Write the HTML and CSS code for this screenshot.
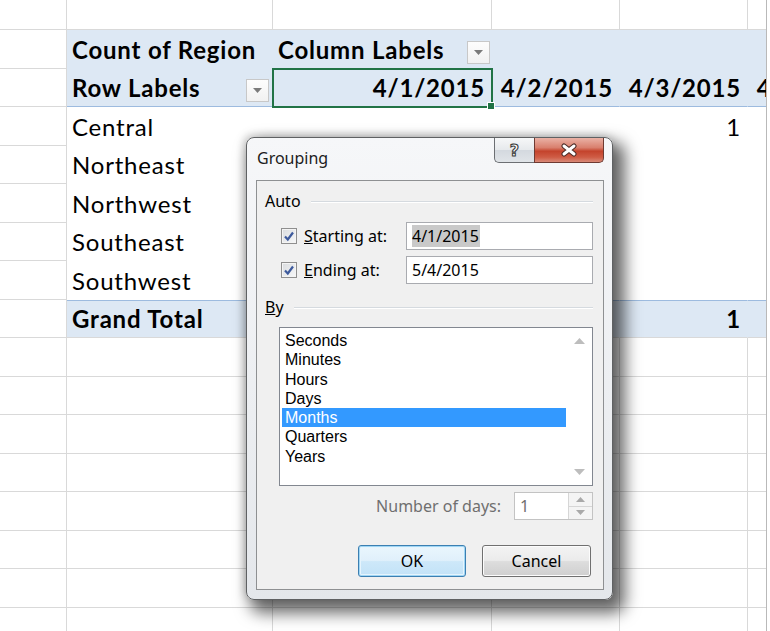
FILE: index.html
```html
<!DOCTYPE html>
<html>
<head>
<meta charset="utf-8">
<title>Grouping</title>
<link rel="stylesheet" href="styles.css">
</head>
<body>
<div class="sheet">
  <div class="row"><div class="c"></div><div class="c"></div><div class="c"></div><div class="c"></div><div class="c"></div><div class="c"></div></div>
  <div class="row">
    <div class="c"></div>
    <div class="c p ph b">Count of Region</div>
    <div class="c p ph b">Column Labels<span class="dd dd-c"><svg width="9" height="5" viewBox="0 0 9 5"><path d="M0 0h9L4.5 5z" fill="#7a7a7a"/></svg></span></div>
    <div class="c p ph"></div><div class="c p ph"></div><div class="c p ph"></div>
  </div>
  <div class="row">
    <div class="c"></div>
    <div class="c p ph hb b">Row Labels<span class="dd dd-b"><svg width="9" height="5" viewBox="0 0 9 5"><path d="M0 0h9L4.5 5z" fill="#7a7a7a"/></svg></span></div>
    <div class="c p ph hb b r sel">4/1/2015</div>
    <div class="c p ph hb b r">4/2/2015</div>
    <div class="c p ph hb b r">4/3/2015</div>
    <div class="c p ph hb b r">4/4/2015</div>
  </div>
  <div class="row"><div class="c"></div><div class="c p">Central</div><div class="c p"></div><div class="c p"></div><div class="c p r">1</div><div class="c p"></div></div>
  <div class="row"><div class="c"></div><div class="c p">Northeast</div><div class="c p"></div><div class="c p"></div><div class="c p"></div><div class="c p"></div></div>
  <div class="row"><div class="c"></div><div class="c p">Northwest</div><div class="c p"></div><div class="c p"></div><div class="c p"></div><div class="c p"></div></div>
  <div class="row"><div class="c"></div><div class="c p">Southeast</div><div class="c p"></div><div class="c p"></div><div class="c p"></div><div class="c p"></div></div>
  <div class="row"><div class="c"></div><div class="c p">Southwest</div><div class="c p"></div><div class="c p"></div><div class="c p"></div><div class="c p"></div></div>
  <div class="row"><div class="c"></div><div class="c p pt b">Grand Total</div><div class="c p pt"></div><div class="c p pt"></div><div class="c p pt b r">1</div><div class="c p pt"></div></div>
  <div class="row"><div class="c"></div><div class="c"></div><div class="c"></div><div class="c"></div><div class="c"></div><div class="c"></div></div>
  <div class="row"><div class="c"></div><div class="c"></div><div class="c"></div><div class="c"></div><div class="c"></div><div class="c"></div></div>
  <div class="row"><div class="c"></div><div class="c"></div><div class="c"></div><div class="c"></div><div class="c"></div><div class="c"></div></div>
  <div class="row"><div class="c"></div><div class="c"></div><div class="c"></div><div class="c"></div><div class="c"></div><div class="c"></div></div>
  <div class="row"><div class="c"></div><div class="c"></div><div class="c"></div><div class="c"></div><div class="c"></div><div class="c"></div></div>
  <div class="row"><div class="c"></div><div class="c"></div><div class="c"></div><div class="c"></div><div class="c"></div><div class="c"></div></div>
  <div class="row"><div class="c"></div><div class="c"></div><div class="c"></div><div class="c"></div><div class="c"></div><div class="c"></div></div>
  <div class="row"><div class="c"></div><div class="c"></div><div class="c"></div><div class="c"></div><div class="c"></div><div class="c"></div></div>
</div>

<div class="dlg">
  <div class="titlebar">
    <span class="title">Grouping</span>
    <div class="capbtns">
      <span class="cap help">?</span>
      <span class="cap close"><svg width="18" height="14" viewBox="0 0 18 14"><path d="M4 3L14 11M14 3L4 11" stroke="#4a2a25" stroke-width="5" stroke-linecap="round"/><path d="M4 3L14 11M14 3L4 11" stroke="#fff" stroke-width="3" stroke-linecap="round"/></svg></span>
    </div>
  </div>
  <div class="client">
    <div class="ghead"><span>Auto</span><i class="rule"></i></div>
    <div class="crow crow1">
      <span class="cb"><svg width="14" height="14" viewBox="0 0 14 14"><path d="M3 7.5L5.8 10.5L11 3.5" fill="none" stroke="#3d5a9c" stroke-width="2.2"/></svg></span>
      <span class="lbl"><u>S</u>tarting at:</span>
      <span class="field"><span class="hl">4/1/2015</span></span>
    </div>
    <div class="crow">
      <span class="cb"><svg width="14" height="14" viewBox="0 0 14 14"><path d="M3 7.5L5.8 10.5L11 3.5" fill="none" stroke="#3d5a9c" stroke-width="2.2"/></svg></span>
      <span class="lbl"><u>E</u>nding at:</span>
      <span class="field">5/4/2015</span>
    </div>
    <div class="ghead ghead2"><span><u>B</u>y</span><i class="rule"></i></div>
    <div class="list">
      <ul class="items">
        <li>Seconds</li>
        <li>Minutes</li>
        <li>Hours</li>
        <li>Days</li>
        <li class="on">Months</li>
        <li>Quarters</li>
        <li>Years</li>
      </ul>
      <div class="sb">
        <span class="arr"><svg width="11" height="6" viewBox="0 0 11 6"><path d="M0 6L5.5 0L11 6z" fill="#bdbdbd"/></svg></span>
        <span class="arr"><svg width="11" height="6" viewBox="0 0 11 6"><path d="M0 0L5.5 6L11 0z" fill="#bdbdbd"/></svg></span>
      </div>
    </div>
    <div class="numrow">
      <span>Number of days:</span>
      <span class="spin"><span class="val">1</span><span class="spinbtns"><span class="sp"><svg width="9" height="5" viewBox="0 0 9 5"><path d="M0 5L4.5 0L9 5z" fill="#a9a9a9"/></svg></span><span class="sp"><svg width="9" height="5" viewBox="0 0 9 5"><path d="M0 0L4.5 5L9 0z" fill="#a9a9a9"/></svg></span></span></span>
    </div>
    <div class="btns">
      <span class="btn ok">OK</span>
      <span class="btn">Cancel</span>
    </div>
  </div>
</div>
</body>
</html>
```

FILE: styles.css
```css
* { box-sizing: border-box; margin: 0; padding: 0; }
body {
  margin: 0;
  width: 770px;
  height: 631px;
  overflow: hidden;
  background: #fff;
  position: relative;
  font-family: Lato, "Liberation Sans", sans-serif;
}

/* spreadsheet */
.sheet {
  width: 767px;
  height: 631px;
  overflow: hidden;
  border-right: 1px solid #b9b9b9;
}
.row {
  display: grid;
  grid-template-columns: 67px 206px 219px 128px 128px 128px;
  height: 38px;
}
.row:nth-child(even) { height: 39px; }
.row:first-child { height: 30px; }
.c {
  border-right: 1px solid #d9d9d9;
  border-bottom: 1px solid #d9d9d9;
  display: flex;
  align-items: flex-end;
  padding: 0 6px 5px 5px;
  font-size: 24px;
  letter-spacing: 0.8px;
  line-height: 27px;
  color: #000;
  white-space: nowrap;
}
.p { border-right-color: transparent; border-bottom-color: transparent; background: #fff; }
.ph { background: #dde8f4; }
.hb { border-bottom-color: #9dbbdf; }
.pt { background: #dde8f4; border-top: 1px solid #9dbbdf; border-bottom-color: #d9d9d9; }
.b { font-weight: 700; }
.r { justify-content: flex-end; }
.sel {
  position: relative;
  z-index: 1;
  outline: 2px solid #217346;
  outline-offset: -1px;
}
.sel::after {
  content: "";
  position: absolute;
  right: -4px;
  bottom: -4px;
  width: 6px;
  height: 6px;
  background: #217346;
  border: 1px solid #fff;
}
.dd {
  width: 23px;
  height: 23px;
  margin-left: auto;
  margin-bottom: -1px;
  border: 1px solid #c8c8c8;
  background: linear-gradient(#fdfdfd, #f1f1f1);
  display: flex;
  align-items: center;
  justify-content: center;
}
.dd-c { margin-right: -5px; }
.dd-b { margin-right: -3px; }

/* dialog */
.dlg {
  position: absolute;
  left: 246px;
  top: 137px;
  width: 367px;
  height: 463px;
  border: 1px solid #5f6163;
  border-radius: 8px;
  background: linear-gradient(180deg, #f6f7f9 0%, #eceef1 60%, #e4e7eb 100%);
  padding: 0 8px 9px 9px;
  display: flex;
  flex-direction: column;
  box-shadow: 8px 9px 16px 4px rgba(0, 0, 0, 0.6), -2px -2px 8px rgba(0, 0, 0, 0.18);
  font-family: "Noto Sans", "Open Sans", sans-serif;
  font-size: 16px;
  color: #000;
  z-index: 5;
}
.titlebar {
  height: 42px;
  flex: none;
  display: flex;
  justify-content: space-between;
  align-items: flex-start;
}
.title { margin-top: 9px; margin-left: 1px; font-size: 16px; color: #1c1c1c; }
.capbtns { display: flex; }
.cap {
  height: 25px;
  display: flex;
  align-items: center;
  justify-content: center;
  border: 1px solid #6c6f73;
  border-top: 0;
}
.help {
  width: 40px;
  border-right: 0;
  border-radius: 0 0 0 5px;
  background: linear-gradient(#f6f7f8, #e6e9ec 50%, #d4d9df 52%, #e0e4e8);
  color: #fff;
  font-family: "DejaVu Sans", sans-serif;
  font-weight: 700;
  font-size: 16px;
  -webkit-text-stroke: 1.1px #3d3d3d;
}
.close {
  width: 70px;
  border-radius: 0 0 5px 0;
  border-color: #6e3a32;
  background: linear-gradient(#eab2a6, #d9806e 40%, #c4432c 55%, #cf5c45 80%, #d98a78);
}
.client {
  flex: 1;
  border: 1px solid #8e9092;
  background: #f0f0f0;
  padding: 0 10px 12px 8px;
  display: flex;
  flex-direction: column;
}
.ghead {
  height: 40px;
  display: flex;
  align-items: center;
  gap: 10px;
  flex: none;
}
.ghead2 { margin-top: 3px; }
.rule {
  flex: 1;
  height: 1px;
  background: #d5dadf;
  box-shadow: 0 1px 0 #fff;
}
.crow {
  height: 28px;
  display: flex;
  align-items: center;
  padding-left: 16px;
  margin-top: 6px;
  flex: none;
}
.crow1 { margin-top: 1px; }
.cb {
  width: 16px;
  height: 16px;
  border: 1px solid #8f8f8f;
  background: linear-gradient(135deg, #d9dbde, #f7f8f9);
  box-shadow: inset 0 0 0 1px #f4f4f4;
  display: flex;
  align-items: center;
  justify-content: center;
  margin-right: 7px;
}
.lbl { width: 102px; }
.field {
  width: 187px;
  height: 28px;
  border: 1px solid #a9abb0;
  background: #fff;
  padding-left: 5px;
  display: flex;
  align-items: center;
}
.hl { background: #c9c9c9; padding-right: 1px; }
.list {
  margin-left: 14px;
  width: 314px;
  height: 159px;
  border: 1px solid #828790;
  background: #fff;
  display: flex;
  flex: none;
}
.items {
  list-style: none;
  width: 286px;
  padding: 3px 0 0 2px;
  font-family: "Liberation Sans", Arial, sans-serif;
  font-size: 16px;
}
.items li {
  height: 19.3px;
  line-height: 19.3px;
  padding-left: 3px;
}
.items li.on { background: #3399ff; color: #fff; }
.sb {
  flex: 1;
  display: flex;
  flex-direction: column;
  justify-content: space-between;
}
.arr {
  height: 26px;
  display: flex;
  align-items: center;
  justify-content: center;
}
.numrow {
  height: 28px;
  margin-top: 6px;
  display: flex;
  justify-content: flex-end;
  align-items: center;
  gap: 13px;
  color: #6f6f6f;
  flex: none;
}
.spin {
  width: 79px;
  height: 28px;
  border: 1px solid #c3c3c3;
  background: #fff;
  display: flex;
}
.val { flex: 1; padding-left: 5px; display: flex; align-items: center; color: #6f6f6f; }
.spinbtns {
  width: 24px;
  display: flex;
  flex-direction: column;
  border-left: 1px solid #d6d6d6;
}
.sp {
  flex: 1;
  display: flex;
  align-items: center;
  justify-content: center;
  background: #f4f4f4;
}
.sp + .sp { border-top: 1px solid #d6d6d6; }
.btns {
  display: flex;
  justify-content: flex-end;
  gap: 16px;
  margin-top: 25px;
  padding-right: 2px;
  flex: none;
}
.btn {
  width: 109px;
  height: 32px;
  border: 1px solid #707070;
  border-radius: 3px;
  background: linear-gradient(#f3f3f3, #ebebeb 48%, #dddddd 52%, #cfcfcf);
  box-shadow: inset 0 0 0 1px #fcfcfc;
  display: flex;
  align-items: center;
  justify-content: center;
}
.ok {
  width: 108px;
  border-color: #3c7fb1;
  box-shadow: inset 0 0 0 1px #9fd6f5, inset 0 0 0 2px #e6f4fc;
  background: linear-gradient(#eaf6fd, #e0f0fb 48%, #cde8f9 52%, #c2e2f7);
}
```
